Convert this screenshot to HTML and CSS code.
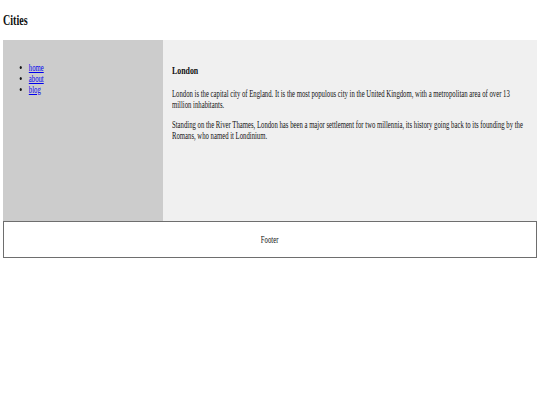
FILE: index.html
```html
<!DOCTYPE html>
<html lang="en">
<head>
<meta charset="utf-8">
<title>Cities</title>
<link rel="stylesheet" href="styles.css">
</head>
<body>
<div class="page">
  <h2 class="title squeeze">Cities</h2>
  <section class="main">
    <nav class="side">
      <ul class="menu squeeze">
        <li><a href="#">home</a></li>
        <li><a href="#">about</a></li>
        <li><a href="#">blog</a></li>
      </ul>
    </nav>
    <article class="content">
      <h3 class="heading squeeze">London</h3>
      <p class="text squeeze">London is the capital city of England. It is the most populous city in the United Kingdom, with a metropolitan area of over 13 million inhabitants.</p>
      <p class="text squeeze">Standing on the River Thames, London has been a major settlement for two millennia, its history going back to its founding by the Romans, who named it Londinium.</p>
    </article>
  </section>
  <footer class="foot">
    <p class="foot-text squeeze">Footer</p>
  </footer>
</div>
</body>
</html>
```
FILE: styles.css
```css
* {
  box-sizing: border-box;
}

html, body {
  margin: 0;
  padding: 0;
  background: #ffffff;
  overflow: hidden;
}

body {
  font-family: "Liberation Serif", "Times New Roman", serif;
  font-size: 9.6px;
  line-height: 11.04px;
  color: #111111;
}

.page {
  padding: 0 3.4px;
  overflow: hidden;
}

/* the text of the page is drawn narrow, as in the reference */
.squeeze {
  width: 142.857%;
  transform: scaleX(0.7);
  transform-origin: 0 0;
}

.title {
  font-size: 14.4px;
  line-height: 16.56px;
  font-weight: bold;
  margin: 11.95px 0;
}

.main {
  display: flex;
  height: 180.5px;
}

.side {
  width: 30%;
  background: #cccccc;
  padding: 12px 8.4px;
}

.menu {
  margin: 9.6px 0;
  padding-left: 24px;
  list-style: disc;
}

.menu a {
  color: #0000ee;
  text-decoration: underline;
}

.content {
  width: 70%;
  background: #f0f0f0;
  padding: 12px 8.4px;
  overflow: hidden;
}

.heading {
  font-size: 11.23px;
  line-height: 12.9px;
  font-weight: bold;
  margin: 11.2px 0;
}

.text {
  margin: 9.6px 0;
}

.foot {
  border: 1px solid #6e6e6e;
  padding: 12px 0;
  text-align: center;
}

.foot-text {
  margin: 0;
}
```
